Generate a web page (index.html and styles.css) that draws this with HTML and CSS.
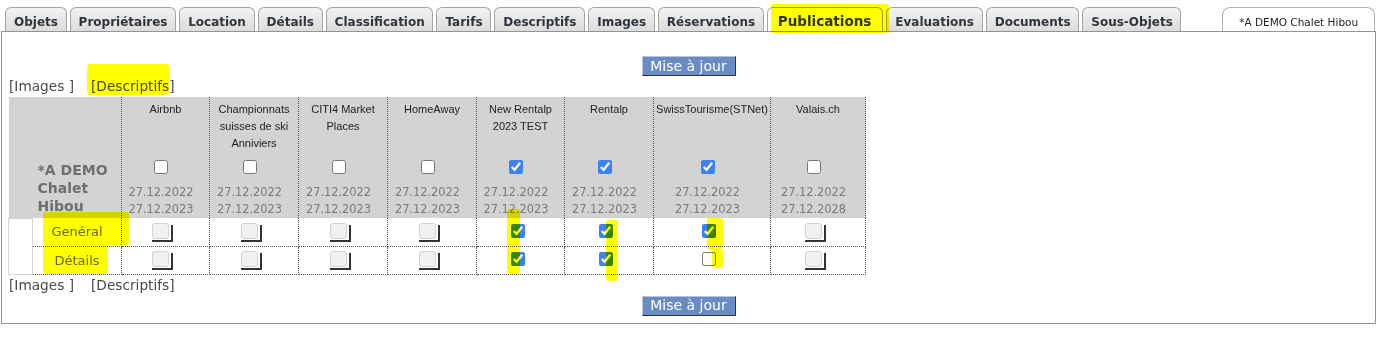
FILE: index.html
```html
<!DOCTYPE html>
<html lang="fr">
<head>
  <meta charset="UTF-8" />
  <title>Publications</title>
  <link rel="stylesheet" href="styles.css">
</head>
<body>
  <div class="tabs">
    <span class="tab">Objets</span>
    <span class="tab">Propriétaires</span>
    <span class="tab">Location</span>
    <span class="tab">Détails</span>
    <span class="tab">Classification</span>
    <span class="tab">Tarifs</span>
    <span class="tab">Descriptifs</span>
    <span class="tab">Images</span>
    <span class="tab">Réservations</span>
    <span class="tab active">Publications</span>
    <span class="tab">Evaluations</span>
    <span class="tab">Documents</span>
    <span class="tab">Sous-Objets</span>
    <span class="tab object">*A DEMO Chalet Hibou</span>
  </div>

  <div class="panel">
    <div class="actions"><button class="update">Mise à jour</button></div>
    <div class="links"><a>[Images ]</a><a>[Descriptifs]</a></div>

    <table class="pubs">
      <colgroup>
        <col class="c-blank"><col class="c-label">
        <col class="c88"><col class="c89"><col class="c89"><col class="c89">
        <col class="c88"><col class="c89"><col class="c117"><col class="c95">
      </colgroup>
      <tr class="head">
        <th colspan="2" class="object-name">*A DEMO<br>Chalet<br>Hibou</th>
        <td><div class="name">Airbnb</div><input type="checkbox"><div class="dates">27.12.2022<br>27.12.2023</div></td>
        <td><div class="name">Championnats suisses de ski Anniviers</div><input type="checkbox"><div class="dates">27.12.2022<br>27.12.2023</div></td>
        <td><div class="name">CITI4 Market Places</div><input type="checkbox"><div class="dates">27.12.2022<br>27.12.2023</div></td>
        <td><div class="name">HomeAway</div><input type="checkbox"><div class="dates">27.12.2022<br>27.12.2023</div></td>
        <td><div class="name">New Rentalp 2023 TEST</div><input type="checkbox" checked><div class="dates">27.12.2022<br>27.12.2023</div></td>
        <td><div class="name">Rentalp</div><input type="checkbox" checked><div class="dates">27.12.2022<br>27.12.2023</div></td>
        <td><div class="name">SwissTourisme(STNet)</div><input type="checkbox" checked><div class="dates">27.12.2022<br>27.12.2023</div></td>
        <td><div class="name">Valais.ch</div><input type="checkbox"><div class="dates">27.12.2022<br>27.12.2028</div></td>
      </tr>
      <tr class="row">
        <td rowspan="2" class="blank"></td>
        <td class="label">Genéral</td>
        <td><span class="old"></span></td>
        <td><span class="old"></span></td>
        <td><span class="old"></span></td>
        <td><span class="old"></span></td>
        <td><input type="checkbox" checked></td>
        <td><input type="checkbox" checked></td>
        <td><input type="checkbox" checked></td>
        <td><span class="old"></span></td>
      </tr>
      <tr class="row">
        <td class="label">Détails</td>
        <td><span class="old"></span></td>
        <td><span class="old"></span></td>
        <td><span class="old"></span></td>
        <td><span class="old"></span></td>
        <td><input type="checkbox" checked></td>
        <td><input type="checkbox" checked></td>
        <td><input type="checkbox"></td>
        <td><span class="old"></span></td>
      </tr>
    </table>

    <div class="links"><a>[Images ]</a><a>[Descriptifs]</a></div>
    <div class="actions"><button class="update">Mise à jour</button></div>
  </div>

  <!-- surligneur -->
  <div class="mark m-tab"></div>
  <div class="mark m-link"></div>
  <div class="mark m-gen"></div>
  <div class="mark m-det"></div>
  <div class="mark m-new"></div>
  <div class="mark m-rent"></div>
  <div class="mark m-swiss"></div>
  <div class="mark m-swiss2"></div>
</body>
</html>
```

FILE: styles.css
```css
body {
  margin: 0;
  font-family: "DejaVu Sans", Verdana, sans-serif;
  background: white;
  position: relative;
  width: 1383px;
  height: 344px;
}
.tabs {
  display: flex;
  gap: 3px;
  padding: 7px 0 0 5px;
  height: 24px;
}
.tab {
  box-sizing: border-box;
  height: 24px;
  padding: 6px 7.7px 0 8px;
  border: 1px solid #a4a4a4;
  border-bottom: none;
  border-radius: 6px 6px 0 0;
  background: linear-gradient(#f2f2f2, #dcdcdc);
  font-weight: bold;
  font-size: 12px;
  line-height: 16px;
  color: #2f3540;
  white-space: nowrap;
}
.tab.active {
  background: white;
  font-size: 13.5px;
  padding: 5px 11px 0 10px;
  color: #333;
}
.tab.object {
  margin-left: auto;
  margin-right: 8px;
  width: 153px;
  text-align: center;
  background: white;
  font-weight: normal;
  font-size: 10.5px;
  color: #222;
  border-color: #b0b0b0;
  border-radius: 8px 8px 0 0;
}
.panel {
  margin-left: 1px;
  width: 1375px;
  box-sizing: border-box;
  border: 1px solid #8e9696;
  padding: 0 6px 7px 6px;
}
.actions {
  display: flex;
  justify-content: center;
  margin-left: -6px;
  margin-right: -6px;
}
.panel > .actions:first-child {
  margin-top: 24px;
}
.update {
  box-sizing: border-box;
  width: 94px;
  height: 20px;
  padding: 0;
  background: #6a8cc4;
  color: white;
  font-family: "DejaVu Sans", Verdana, sans-serif;
  font-size: 14px;
  line-height: 17px;
  border: 1px solid;
  border-color: #b9c6da #333 #333 #b9c6da;
}
.links {
  height: 21px;
  line-height: 21px;
  font-size: 13.7px;
  color: #4a4a4a;
  padding-left: 1px;
}
.links a {
  margin-right: 17px;
}

.pubs {
  border-collapse: collapse;
  table-layout: fixed;
  width: 857px;
}
.c-blank { width: 24px; }
.c-label { width: 89px; }
.c88 { width: 88px; }
.c89 { width: 89px; }
.c117 { width: 117px; }
.c95 { width: 95px; }

.pubs td, .pubs th {
  padding: 0;
  border-right: 1px dotted #555;
}
.head {
  background: #d3d3d3;
  height: 121px;
}
.head td {
  vertical-align: top;
  text-align: center;
  padding: 4px 9px 0 0;
}
.head .name {
  height: 51px;
  margin-right: -9px;
  font-family: "Liberation Sans", Arial, sans-serif;
  font-size: 11px;
  line-height: 17px;
  color: #222;
}
.head input {
  margin: 8px 0 0 0;
  width: 14px;
  height: 14px;
  accent-color: #3b82f6;
}
.dates {
  margin-top: 6px;
  font-size: 11.4px;
  line-height: 17px;
  color: #7a7a7a;
  white-space: nowrap;
}
.object-name {
  vertical-align: bottom;
  text-align: left;
  padding: 0 0 3px 29px !important;
  font-size: 14px;
  line-height: 18px;
  color: #6e6e6e;
}

.row {
  height: 28px;
}
.row td {
  text-align: center;
  vertical-align: middle;
  border-bottom: 1px dotted #555;
  padding-right: 6px;
}
.row input {
  margin: 2px 0 0 0;
  width: 14px;
  height: 14px;
  accent-color: #3b82f6;
}
.row td.blank {
  border: 1px solid #d4d4d4;
  padding: 0;
}
.row td.label {
  padding: 0;
  font-size: 13px;
  color: #6a6a6a;
}
.old {
  display: inline-block;
  position: relative;
  width: 21px;
  height: 19px;
  vertical-align: middle;
}
.old::before {
  content: "";
  position: absolute;
  left: 0;
  top: 0;
  width: 15px;
  height: 14px;
  background: #f1f1f1;
  border: 1px solid #d2d2d2;
  border-radius: 3px;
}
.old::after {
  content: "";
  position: absolute;
  right: 0;
  bottom: 0;
  width: 19px;
  height: 15px;
  border-right: 2px solid #333;
  border-bottom: 2px solid #333;
}

.mark {
  position: absolute;
  background: #ffff00;
  mix-blend-mode: multiply;
  border-radius: 3px;
}
.m-tab { left: 771px; top: 4px; width: 118px; height: 29px; }
.m-link { left: 87px; top: 64px; width: 82px; height: 31px; }
.m-gen { left: 43px; top: 212px; width: 86px; height: 33px; }
.m-det { left: 43px; top: 245px; width: 65px; height: 29px; }
.m-new { left: 507px; top: 209px; width: 13px; height: 65px; }
.m-rent { left: 606px; top: 220px; width: 12px; height: 61px; }
.m-swiss { left: 707px; top: 218px; width: 16px; height: 32px; }
.m-swiss2 { left: 712px; top: 250px; width: 11px; height: 18px; }
```
